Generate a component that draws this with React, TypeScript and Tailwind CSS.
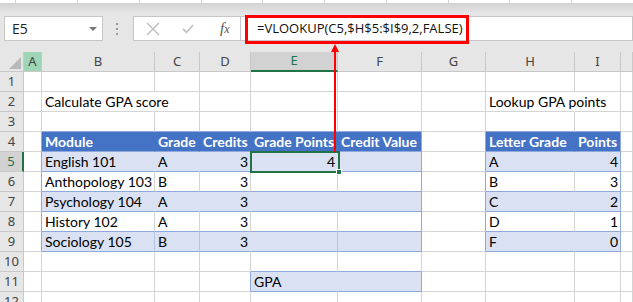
import React from "react";

const LETTERS = ["A", "B", "C", "D", "E", "F", "G", "H", "I", "J"];
const ROWS = [1, 2, 3, 4, 5, 6, 7, 8, 9, 10, 11, 12];

type Cell = { v: string; right?: boolean; bold?: boolean };

const DATA: Record<string, Cell> = {
  B2: { v: "Calculate GPA score" },
  H2: { v: "Lookup GPA points" },
  B4: { v: "Module", bold: true },
  C4: { v: "Grade", bold: true },
  D4: { v: "Credits", bold: true },
  E4: { v: "Grade Points", bold: true },
  F4: { v: "Credit Value", bold: true },
  H4: { v: "Letter Grade", bold: true },
  I4: { v: "Points", bold: true },
  B5: { v: "English 101" },
  C5: { v: "A" },
  D5: { v: "3", right: true },
  E5: { v: "4", right: true },
  B6: { v: "Anthopology 103" },
  C6: { v: "B" },
  D6: { v: "3", right: true },
  B7: { v: "Psychology 104" },
  C7: { v: "A" },
  D7: { v: "3", right: true },
  B8: { v: "History 102" },
  C8: { v: "A" },
  D8: { v: "3", right: true },
  B9: { v: "Sociology 105" },
  C9: { v: "B" },
  D9: { v: "3", right: true },
  H5: { v: "A" },
  I5: { v: "4", right: true },
  H6: { v: "B" },
  I6: { v: "3", right: true },
  H7: { v: "C" },
  I7: { v: "2", right: true },
  H8: { v: "D" },
  I8: { v: "1", right: true },
  H9: { v: "F" },
  I9: { v: "0", right: true },
  E11: { v: "GPA" },
};

const inT1 = (c: number, r: number) => c >= 1 && c <= 5 && r >= 4 && r <= 9;
const inT2 = (c: number, r: number) => c >= 7 && c <= 8 && r >= 4 && r <= 9;
const inGpa = (c: number, r: number) => (c === 4 || c === 5) && r === 11;

function cellBg(c: number, r: number) {
  if (inT1(c, r) || inT2(c, r)) {
    if (r === 4) return "bg-[#4472c4]";
    return r % 2 === 1 ? "bg-[#d9e1f2]" : "";
  }
  if (inGpa(c, r)) return "bg-[#d9e1f2]";
  return "";
}

function rightBorder(c: number, r: number) {
  const blue = "border-r-[#8ea9db]";
  if ((c === 5 && inT1(c, r)) || (c === 8 && inT2(c, r))) return blue;
  if ((c === 0 || c === 6) && r >= 4 && r <= 9) return blue;
  if ((c === 3 || c === 5) && r === 11) return blue;
  if (c === 4 && r === 11) return "border-r-[#d9e1f2]";
  if (inT1(c, r) || inT2(c, r)) {
    if (r === 4) return "border-r-[#4472c4]";
    if (r % 2 === 1) {
      if (inT1(c, r) && r === 9 && (c === 1 || c === 2 || c === 4)) return "border-r-[#b4c6e7]";
      return "border-r-[#d9e1f2]";
    }
  }
  if ((c === 1 || c === 7) && r === 2) return "border-r-white";
  return "border-r-[#d4d4d4]";
}

function bottomBorder(c: number, r: number) {
  const blue = "border-b-[#8ea9db]";
  if (inT1(c, r) || inT2(c, r)) return blue;
  if (r === 3 && ((c >= 1 && c <= 5) || c === 7 || c === 8)) return blue;
  if ((c === 4 || c === 5) && (r === 10 || r === 11)) return blue;
  return "border-b-[#d4d4d4]";
}

function FormulaBar() {
  return (
    <div className="h-[52px] bg-[#e6e6e6] flex flex-col">
      <div className="h-[3px] bg-white flex">
        <div className="w-[16px]" />
        {Array.from({ length: 10 }).map((_, i) => (
          <div key={i} className="w-[64px] border-l border-[#d4d4d4]" />
        ))}
      </div>
      <div className="h-[11px] bg-linear-to-b from-[#d2d2d2] to-[#e6e6e6]" />
      <div className="flex items-center mt-[2px] h-[25px]">
        {/* name box */}
        <div className="ml-[4px] w-[99px] h-[25px] bg-white border border-[#c6c6c6] flex items-center justify-between pl-[7px] pr-[5px]">
          <span className="text-[14px] text-[#222] font-['Segoe_UI','Open_Sans',sans-serif]">E5</span>
          <span className="w-0 h-0 border-l-[4px] border-r-[4px] border-t-[4px] border-l-transparent border-r-transparent border-t-[#777]" />
        </div>
        <div className="ml-[13px] flex flex-col gap-[3px]">
          <span className="w-[2px] h-[2px] bg-[#9a9a9a]" />
          <span className="w-[2px] h-[2px] bg-[#9a9a9a]" />
          <span className="w-[2px] h-[2px] bg-[#9a9a9a]" />
        </div>
        {/* cancel / enter / fx */}
        <div className="ml-[15px] w-[108px] h-[25px] bg-white border border-[#c6c6c6] flex items-center">
          <svg width="14" height="14" viewBox="0 0 14 14" className="ml-[12px]">
            <path d="M1 1L13 13M13 1L1 13" stroke="#c2c2c2" strokeWidth="1.6" />
          </svg>
          <svg width="12" height="10" viewBox="0 0 12 10" className="ml-[22px]">
            <path d="M1 5L4.5 8.5L11 1" stroke="#c2c2c2" strokeWidth="1.8" fill="none" />
          </svg>
          <span className="ml-[26px] text-[15px] italic text-[#555] font-['Liberation_Serif',serif] leading-none">
            <span>f</span>
            <span className="text-[12px]">x</span>
          </span>
        </div>
        {/* formula input */}
        <div className="flex-1 h-[25px] bg-white border-y border-r border-[#c6c6c6] flex items-center pl-[16px]">
          <span className="text-[13px] text-[#111] font-['Segoe_UI','Open_Sans',sans-serif] whitespace-nowrap">
            =VLOOKUP(C5,$H$5:$I$9,2,FALSE)
          </span>
        </div>
      </div>
    </div>
  );
}

function Sheet() {
  const headFont = "font-['Segoe_UI','Noto_Sans',sans-serif] text-[13px] text-[#444]";
  const cellFont = "font-['Lato','Liberation_Sans',sans-serif] text-[14px]";
  return (
    <div className="grid grid-cols-[24px_18px_113px_45px_51px_87px_84px_64px_89px_46px_1fr] bg-white">
      {/* corner */}
      <div className="h-[20px] bg-[#e6e6e6] border-r border-b border-[#c8c8c8] flex items-end justify-end pr-[2px] pb-[2px]">
        <svg width="12" height="12" viewBox="0 0 12 12">
          <polygon points="12,0 12,12 0,12" fill="#b9b9b9" />
        </svg>
      </div>
      {LETTERS.map((l, c) => {
        const sel = l === "E";
        const cls =
          l === "A"
            ? "bg-[#9fd5b7] border-r border-b border-[#c8c8c8]"
            : sel
            ? "bg-[#d2d2d2] border-r border-r-[#c8c8c8] border-b-2 border-b-[#217346] text-[#217346]"
            : "bg-[#e6e6e6] border-r border-b border-[#c8c8c8]";
        return (
          <div key={c} className={`h-[20px] flex items-center justify-center ${headFont} ${cls}`}>
            {/* J is only partly in view, its letter sits off-screen */}
            {l === "J" ? "" : l}
          </div>
        );
      })}
      {ROWS.map((r) => (
        <React.Fragment key={r}>
          <div
            className={`h-[20px] flex items-center justify-center ${headFont} ${
              r === 5
                ? "bg-[#d2d2d2] border-r-2 border-r-[#217346] border-b border-b-[#c8c8c8] text-[#217346]"
                : "bg-[#e6e6e6] border-r border-b border-[#c8c8c8]"
            }`}
          >
            {r}
          </div>
          {LETTERS.map((l, c) => {
            const d = DATA[`${l}${r}`];
            const header = r === 4 && (inT1(c, r) || inT2(c, r));
            return (
              <div
                key={l}
                className={`h-[20px] border-r border-b flex items-center whitespace-nowrap ${cellFont} ${cellBg(c, r)} ${rightBorder(
                  c,
                  r
                )} ${bottomBorder(c, r)} ${d?.right ? "justify-end pr-[2px]" : "pl-[3px]"} ${
                  header ? "text-white font-bold" : "text-black"
                }`}
              >
                {d?.v}
              </div>
            );
          })}
        </React.Fragment>
      ))}
    </div>
  );
}

export default function App() {
  return (
    <div className="relative w-[633px] h-[302px] overflow-hidden bg-white">
      <FormulaBar />
      <Sheet />
      {/* selected cell E5 */}
      <div className="absolute left-[250px] top-[151px] w-[90px] h-[22px] border-2 border-[#217346]" />
      <div className="absolute left-[336px] top-[169px] w-[6px] h-[6px] bg-[#217346] border border-white" />
      {/* annotation */}
      <div className="absolute left-[245px] top-[15px] w-[224px] h-[29px] border-[3px] border-[#ff0000]" />
      <svg className="absolute left-[330px] top-[44px]" width="10" height="108" viewBox="0 0 10 108">
        <line x1="5" y1="6" x2="5" y2="108" stroke="#ff0000" strokeWidth="2" />
        <polygon points="5,0 1,8 9,8" fill="#ff0000" />
      </svg>
    </div>
  );
}
